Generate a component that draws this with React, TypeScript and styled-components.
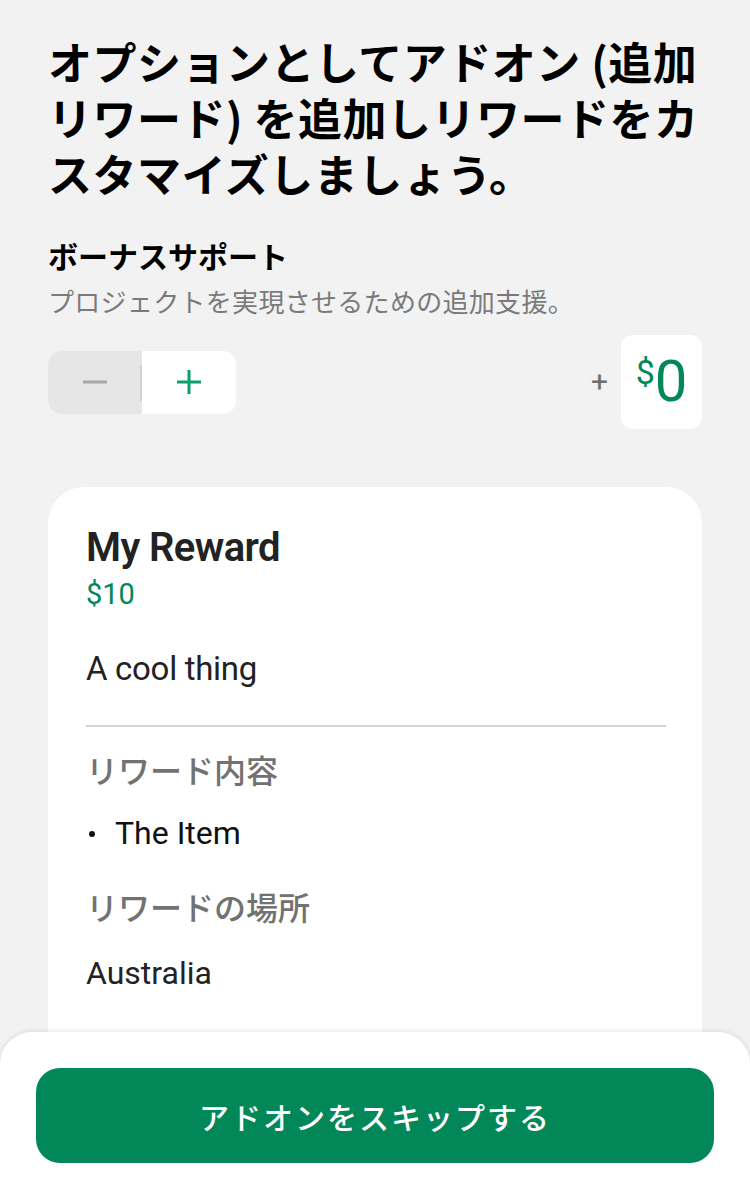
import React from "react";
import styled, { createGlobalStyle } from "styled-components";

const GREEN = "#028858";
const JP = `"Noto Sans CJK JP", "Noto Sans", sans-serif`;
const LATIN = `Roboto, "Noto Sans CJK JP", sans-serif`;

const Global = createGlobalStyle`
  html, body {
    margin: 0;
    padding: 0;
    background: #f2f2f2;
    overflow: hidden;
  }
  * { box-sizing: border-box; }
`;

const Page = styled.div`
  min-height: 1200px;
  padding: 33px 48px 0 48px;
  font-family: ${JP};
`;

const Title = styled.h1`
  margin: 0;
  font-family: ${JP};
  font-size: 44px;
  line-height: 56px;
  font-weight: 700;
  letter-spacing: 0.5px;
  color: #000;
`;

const SectionHeading = styled.h2`
  margin: 35px 0 0;
  font-family: ${JP};
  font-size: 30px;
  line-height: 38px;
  font-weight: 700;
  color: #000;
`;

const SectionSub = styled.p`
  margin: 9px 0 0;
  font-family: ${JP};
  font-size: 26px;
  line-height: 36px;
  font-weight: 400;
  letter-spacing: 0.3px;
  color: #7a7a7a;
`;

const AmountRow = styled.div`
  margin-top: 16px;
  display: flex;
  align-items: center;
  justify-content: space-between;
`;

const Stepper = styled.div`
  display: flex;
  width: 188px;
  height: 63px;
  border-radius: 14px;
  overflow: hidden;
  background: #fff;
`;

const StepButton = styled.button<{ $muted?: boolean }>`
  flex: 1;
  display: flex;
  align-items: center;
  justify-content: center;
  border: none;
  padding: 0;
  margin: 0;
  background: ${(p) => (p.$muted ? "#e6e6e6" : "#ffffff")};
  position: relative;
  ${(p) =>
    p.$muted
      ? `&::after {
    content: "";
    position: absolute;
    right: 0;
    top: 14px;
    bottom: 13px;
    width: 2px;
    background: #d2d2d2;
  }`
      : ""}
`;

const AmountSide = styled.div`
  display: flex;
  align-items: center;
  gap: 13px;
`;

const PlusSign = styled.span`
  font-family: ${LATIN};
  font-size: 30px;
  line-height: 30px;
  color: #6e6e6e;
  font-weight: 400;
`;

const ValueBox = styled.div`
  width: 81px;
  height: 94px;
  border-radius: 12px;
  background: #fff;
  display: flex;
  align-items: flex-start;
  justify-content: center;
  padding-top: 17px;
  color: ${GREEN};
  font-family: ${LATIN};
`;

const Currency = styled.span`
  font-size: 34px;
  line-height: 34px;
  margin-top: 3px;
`;

const Value = styled.span`
  font-size: 58px;
  line-height: 58px;
`;

const Card = styled.div`
  margin-top: 58px;
  background: #fff;
  border-radius: 36px;
  padding: 37px 36px 160px 38px;
`;

const RewardTitle = styled.div`
  font-family: ${LATIN};
  font-size: 40px;
  line-height: 48px;
  font-weight: 600;
  letter-spacing: -0.6px;
  color: #222;
`;

const Price = styled.div`
  margin-top: 4px;
  font-family: ${LATIN};
  font-size: 29px;
  line-height: 36px;
  color: ${GREEN};
`;

const Description = styled.div`
  margin-top: 37px;
  font-family: ${LATIN};
  font-size: 33px;
  line-height: 40px;
  color: #222;
  letter-spacing: -0.3px;
`;

const Divider = styled.hr`
  margin: 36px 0 0;
  border: none;
  height: 2px;
  background: #d4d4d4;
`;

const Label = styled.div<{ $gap: number }>`
  margin-top: ${(p) => p.$gap}px;
  font-family: ${JP};
  font-size: 32px;
  line-height: 44px;
  font-weight: 500;
  color: #727272;
`;

const ItemList = styled.ul`
  list-style: none;
  margin: 22px 0 0;
  padding: 0;
`;

const Item = styled.li`
  display: flex;
  align-items: center;
  gap: 20px;
  font-family: ${LATIN};
  font-size: 32px;
  line-height: 40px;
  color: #111;
`;

const Bullet = styled.span`
  width: 6px;
  height: 6px;
  border-radius: 50%;
  background: #111;
  margin-left: 3px;
  margin-top: 2px;
`;

const Plain = styled.div`
  margin-top: 25px;
  font-family: ${LATIN};
  font-size: 32px;
  line-height: 40px;
  color: #222;
`;

const Sheet = styled.div`
  position: fixed;
  left: 0;
  right: 0;
  bottom: 0;
  height: 168px;
  background: #fff;
  border-radius: 32px 32px 0 0;
  box-shadow: 0 -1px 5px rgba(0, 0, 0, 0.1);
  padding: 36px 36px 0;
`;

const SkipButton = styled.button`
  width: 100%;
  height: 95px;
  border: none;
  border-radius: 24px;
  background: ${GREEN};
  color: #fff;
  font-family: ${JP};
  font-size: 30px;
  font-weight: 500;
  letter-spacing: 2px;
  display: flex;
  align-items: center;
  justify-content: center;
`;

const MinusIcon = () => (
  <svg width="24" height="4" viewBox="0 0 24 4">
    <rect x="0" y="0.5" width="24" height="3" fill="#a8a8a8" />
  </svg>
);

const PlusIcon = () => (
  <svg width="24" height="24" viewBox="0 0 24 24">
    <rect x="0" y="10.5" width="24" height="3" fill="#0b9e6e" />
    <rect x="10.5" y="0" width="3" height="24" fill="#0b9e6e" />
  </svg>
);

export default function App() {
  return (
    <>
      <Global />
      <Page>
        <Title>オプションとしてアドオン (追加リワード) を追加しリワードをカスタマイズしましょう。</Title>
        <SectionHeading>ボーナスサポート</SectionHeading>
        <SectionSub>プロジェクトを実現させるための追加支援。</SectionSub>
        <AmountRow>
          <Stepper>
            <StepButton $muted aria-label="減らす">
              <MinusIcon />
            </StepButton>
            <StepButton aria-label="増やす">
              <PlusIcon />
            </StepButton>
          </Stepper>
          <AmountSide>
            <PlusSign>+</PlusSign>
            <ValueBox>
              <Currency>$</Currency>
              <Value>0</Value>
            </ValueBox>
          </AmountSide>
        </AmountRow>
        <Card>
          <RewardTitle>My Reward</RewardTitle>
          <Price>$10</Price>
          <Description>A cool thing</Description>
          <Divider />
          <Label $gap={20}>リワード内容</Label>
          <ItemList>
            <Item>
              <Bullet />
              The Item
            </Item>
          </ItemList>
          <Label $gap={31}>リワードの場所</Label>
          <Plain>Australia</Plain>
        </Card>
      </Page>
      <Sheet>
        <SkipButton>アドオンをスキップする</SkipButton>
      </Sheet>
    </>
  );
}
